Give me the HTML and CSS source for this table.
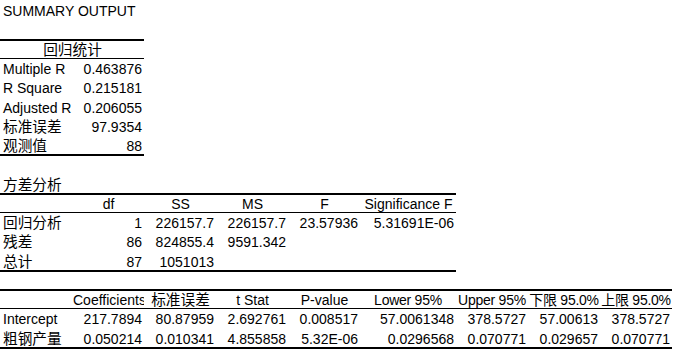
FILE: index.html
```html
<!DOCTYPE html>
<html lang="zh-CN">
<head>
<meta charset="utf-8">
<title>SUMMARY OUTPUT</title>
<link rel="stylesheet" href="styles.css">
</head>
<body>
<div class="sheet">
  <div class="c r1 k1 wide">SUMMARY OUTPUT</div>

  <div class="c m zh r3 ab">回归统计</div>
  <div class="rule thick r3 ab"></div>
  <div class="rule r4 ab"></div>
  <div class="c r4 k1">Multiple R</div><div class="c n r4 k2">0.463876</div>
  <div class="c r5 k1">R Square</div><div class="c n r5 k2">0.215181</div>
  <div class="c r6 k1">Adjusted R Square</div><div class="c n r6 k2">0.206055</div>
  <div class="c zh r7 k1">标准误差</div><div class="c n r7 k2">97.9354</div>
  <div class="c zh r8 k1">观测值</div><div class="c n r8 k2">88</div>
  <div class="rule thick r9 ab"></div>

  <div class="c zh r10 k1">方差分析</div>
  <div class="rule thick r11 af"></div>
  <div class="c m r11 k2">df</div>
  <div class="c m r11 k3">SS</div>
  <div class="c m r11 k4">MS</div>
  <div class="c m r11 k5">F</div>
  <div class="c m r11 k6">Significance F</div>
  <div class="rule r12 af"></div>
  <div class="c zh r12 k1">回归分析</div><div class="c n r12 k2">1</div><div class="c n r12 k3">226157.7</div><div class="c n r12 k4">226157.7</div><div class="c n r12 k5">23.57936</div><div class="c n r12 k6">5.31691E-06</div>
  <div class="c zh r13 k1">残差</div><div class="c n r13 k2">86</div><div class="c n r13 k3">824855.4</div><div class="c n r13 k4">9591.342</div>
  <div class="c zh r14 k1">总计</div><div class="c n r14 k2">87</div><div class="c n r14 k3">1051013</div>
  <div class="rule thick r15 af"></div>

  <div class="rule thick r16 ai"></div>
  <div class="c tight r16 k2">Coefficients</div>
  <div class="c m zh r16 k3">标准误差</div>
  <div class="c m r16 k4">t Stat</div>
  <div class="c m r16 k5">P-value</div>
  <div class="c m cond r16 k6">Lower 95%</div>
  <div class="c m cond r16 k7">Upper 95%</div>
  <div class="c m cond r16 k8">下限 95.0%</div>
  <div class="c m cond r16 k9">上限 95.0%</div>
  <div class="rule r17 ai"></div>
  <div class="c r17 k1">Intercept</div><div class="c n r17 k2">217.7894</div><div class="c n r17 k3">80.87959</div><div class="c n r17 k4">2.692761</div><div class="c n r17 k5">0.008517</div><div class="c n r17 k6">57.0061348</div><div class="c n r17 k7">378.5727</div><div class="c n r17 k8">57.00613</div><div class="c n r17 k9">378.5727</div>
  <div class="c zh r18 k1">粗钢产量</div><div class="c n r18 k2">0.050214</div><div class="c n r18 k3">0.010341</div><div class="c n r18 k4">4.855858</div><div class="c n r18 k5">5.32E-06</div><div class="c n r18 k6">0.0296568</div><div class="c n r18 k7">0.070771</div><div class="c n r18 k8">0.029657</div><div class="c n r18 k9">0.070771</div>
  <div class="rule thick r19 ai"></div>
</div>
</body>
</html>
```
FILE: styles.css
```css
html, body {
  margin: 0;
  background: #fff;
}
body {
  font-family: "Liberation Sans", "Noto Sans CJK SC", sans-serif;
  font-size: 14px;
  color: #000;
}
.sheet {
  display: grid;
  grid-template-columns: 72px 72px 72px 72px 72px 96px 72px 72px 72px;
  grid-template-rows: repeat(19, 19.25px);
  width: 672px;
}
.c {
  display: flex;
  align-items: flex-end;
  justify-content: flex-start;
  overflow: hidden;
  white-space: nowrap;
  padding: 0 2px 0 3px;
  line-height: 15px;
  min-width: 0;
}
.c.wide { overflow: visible; }
.c.n { justify-content: flex-end; }
.c.m { justify-content: center; }
.c.tight { padding-left: 1px; padding-right: 0; }
.c.cond { letter-spacing: -0.25px; padding: 0 1px; }
.zh { font-size: 14.67px; }
.rule {
  align-self: start;
  height: 0;
  border-top: 1px solid #000;
}
.rule.thick { border-top-width: 2px; }

.r1 { grid-row: 1; } .r3 { grid-row: 3; } .r4 { grid-row: 4; } .r5 { grid-row: 5; }
.r6 { grid-row: 6; } .r7 { grid-row: 7; } .r8 { grid-row: 8; } .r9 { grid-row: 9; }
.r10 { grid-row: 10; } .r11 { grid-row: 11; } .r12 { grid-row: 12; } .r13 { grid-row: 13; }
.r14 { grid-row: 14; } .r15 { grid-row: 15; } .r16 { grid-row: 16; } .r17 { grid-row: 17; }
.r18 { grid-row: 18; } .r19 { grid-row: 19; }

.k1 { grid-column: 1; } .k2 { grid-column: 2; } .k3 { grid-column: 3; }
.k4 { grid-column: 4; } .k5 { grid-column: 5; } .k6 { grid-column: 6; }
.k7 { grid-column: 7; } .k8 { grid-column: 8; } .k9 { grid-column: 9; }
.wide { grid-column: 1 / 4; }
.ab { grid-column: 1 / 3; }
.af { grid-column: 1 / 7; }
.ai { grid-column: 1 / 10; }
```
